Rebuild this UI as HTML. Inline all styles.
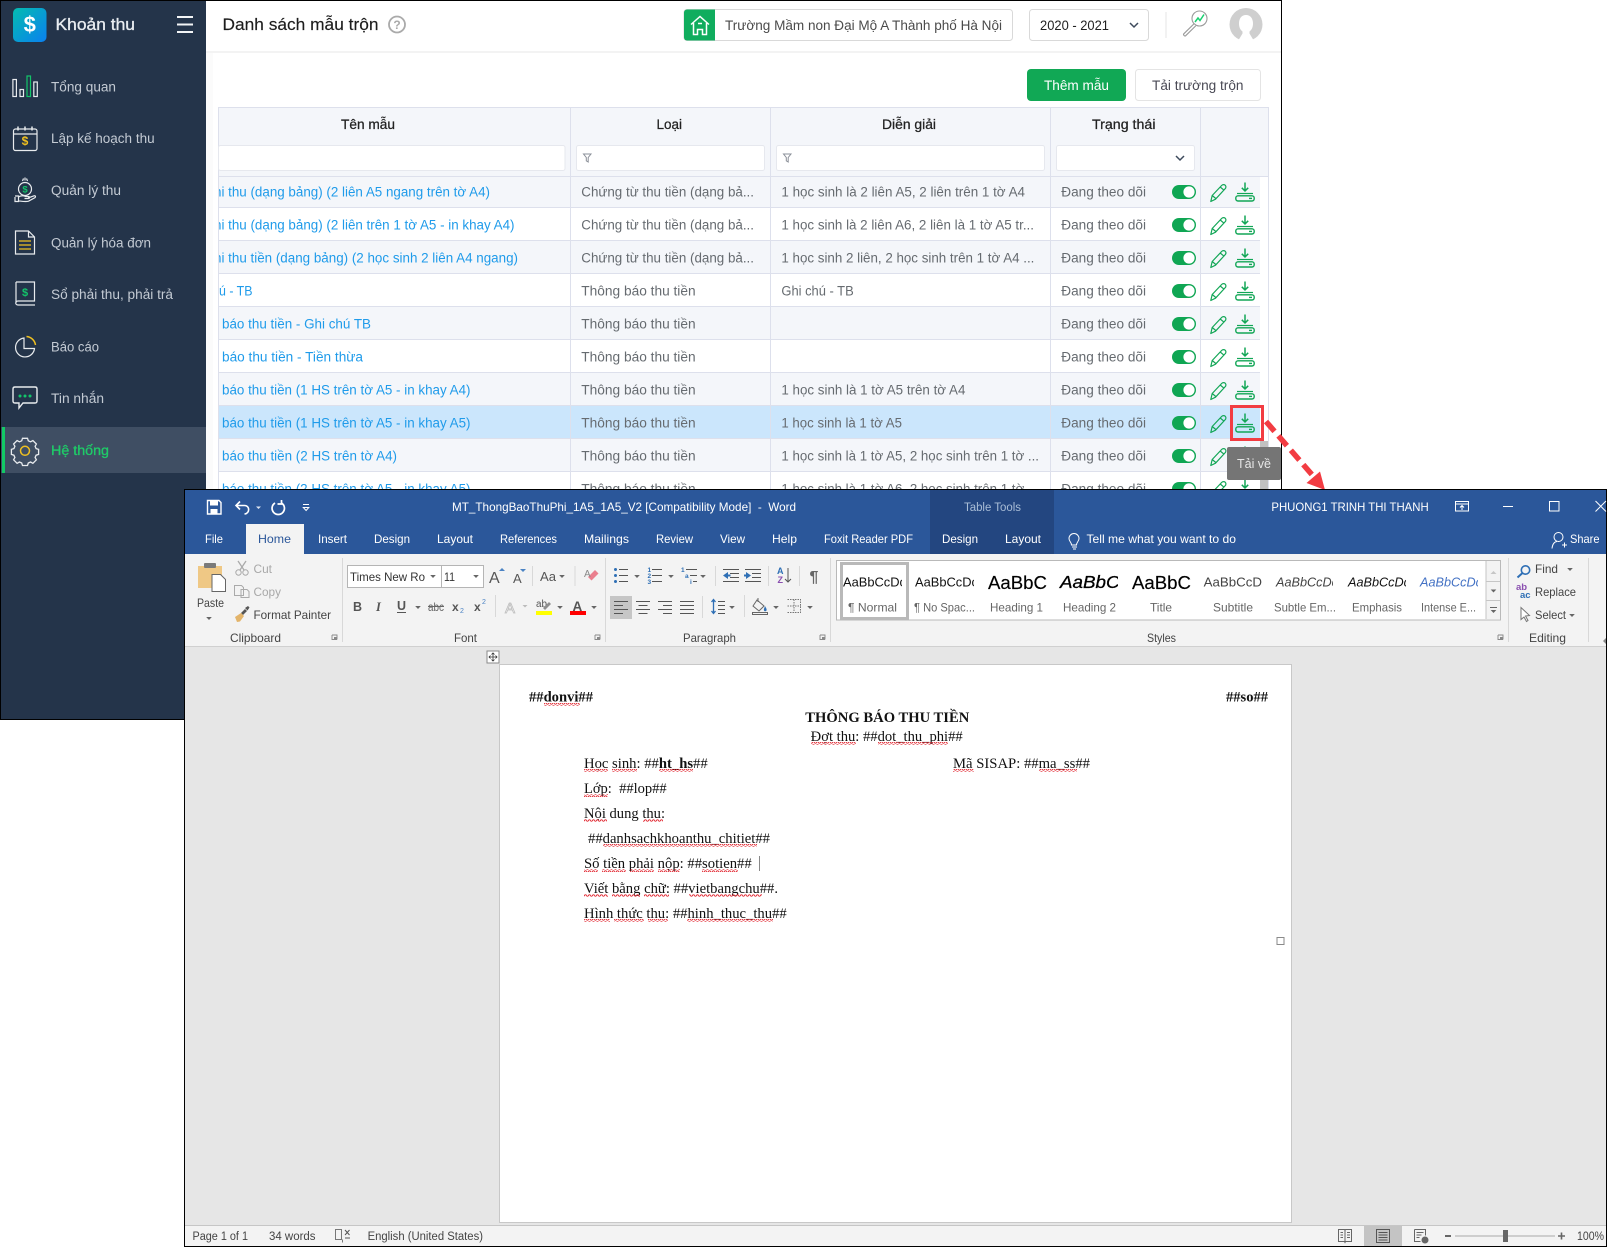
<!DOCTYPE html>
<html lang="vi"><head><meta charset="utf-8"><title>Danh sách mẫu trộn</title>
<style>
html,body{margin:0;padding:0;background:#fff;width:1607px;height:1247px;overflow:hidden}
svg{display:block}
text{font-family:"Liberation Sans","DejaVu Sans",sans-serif;white-space:pre}
.nav{font-size:13.5px;fill:#c3cad3}
.lk{font-size:13.5px;fill:#1f9bea}
.td{font-size:13.5px;fill:#666b70}
.th{font-size:13.5px;fill:#222;stroke:#222;stroke-width:.25}
.w{font-size:12px;fill:#fff}
.r{font-size:12px;fill:#444}
.g{font-size:12px;fill:#a8a8a8}
.l{font-size:12px;fill:#666}
.sb{font-size:11.5px;fill:#444}
.d{font-family:"Liberation Serif","Times New Roman",serif;font-size:14.5px;fill:#111}
.b{font-weight:700}
</style></head><body>
<svg width="1607" height="1247" viewBox="0 0 1607 1247" xmlns="http://www.w3.org/2000/svg">
<defs>
<linearGradient id="lg" x1="0" y1="0" x2="1" y2="1"><stop offset="0" stop-color="#04bcb0"/><stop offset="1" stop-color="#0a80f0"/></linearGradient>
<pattern id="wv" width="4" height="3" patternUnits="userSpaceOnUse"><path d="M0 2.2L1 .8 2 .8 3 2.2 4 2.2" fill="none" stroke="#e0202a" stroke-width=".9"/></pattern>
<clipPath id="cn"><rect x="219" y="176" width="350" height="320"/></clipPath>
<g id="acts">
<rect x="1172" y="185" width="24" height="14" rx="7" fill="#0fa653"/><circle cx="1189" cy="192" r="5.600" fill="#fff"/>
<path d="M1210.800 201.500l1.400-6 9.400-10c1.200-1.200 3-1.200 3.800 0 .8 1 .6 2.400-.5 3.500l-9.400 10.200zM1212.200 195.500l4.200 3.500M1220 186.900l4.200 3.400" fill="none" stroke="#12a656" stroke-width="1.200" stroke-linejoin="round"/>
<path d="M1245 182.500v8M1241.800 187.800l3.200 3.200 3.200-3.200" fill="none" stroke="#12a656" stroke-width="1.500"/>
<path d="M1237 193.500h16" stroke="#12a656" stroke-width="1.200"/>
<rect x="1235.800" y="195.800" width="18.400" height="5.200" rx="2.200" fill="none" stroke="#12a656" stroke-width="1.400"/><path d="M1249 198.400h3" stroke="#12a656" stroke-width="1.400"/>
</g>
<path id="tri" d="M-2.800 0h5.600L0 3z" fill="#666"/>
<g id="l4" stroke="#555" stroke-width="1"><path d="M0 .5h14M0 4.500h9M0 8.500h14M0 12.500h9"/></g>
<g id="l4c" stroke="#555" stroke-width="1"><path d="M0 .5h14M2.500 4.500h9M0 8.500h14M2.500 12.500h9"/></g>
<g id="l4r" stroke="#555" stroke-width="1"><path d="M0 .5h14M5 4.500h9M0 8.500h14M5 12.500h9"/></g>
<g id="l4j" stroke="#555" stroke-width="1"><path d="M0 .5h14M0 4.500h14M0 8.500h14M0 12.500h14"/></g>
<g id="lc"><path d="M0 0h5v4.500M5 4.500H0V0" fill="none" stroke="#888" stroke-width=".9"/><path d="M2 2h2.800v2.500H2z" fill="#888"/></g>
</defs>

<rect x="0" y="0" width="1282" height="720" fill="#000"/>
<rect x="1" y="1" width="1280" height="718" fill="#fff"/>

<rect x="1" y="1" width="205" height="718" fill="#24344a"/>
<rect x="13" y="8" width="33.500" height="34" rx="5" fill="url(#lg)"/>
<text x="29.800" y="32" text-anchor="middle" style="font-size:22px;font-weight:700;fill:#fff">$</text>
<text x="55.500" y="30" textLength="79.500" lengthAdjust="spacingAndGlyphs" style="font-size:16.500px;fill:#e9edf1;stroke:#e9edf1;stroke-width:.3">Khoản thu</text>
<path d="M177 17h16M177 24.500h16M177 32h16" stroke="#f2f4f6" stroke-width="2"/>

<g fill="none" stroke="#e8ebee" stroke-width="1.200">
<rect x="12.900" y="79.500" width="3.500" height="17"/><rect x="20" y="89.500" width="3.500" height="7"/><rect x="27" y="76" width="3.500" height="20.500" stroke="#13c56a"/><rect x="33.800" y="82" width="3.500" height="14.500"/>
<rect x="13.500" y="129" width="23.500" height="21.500" rx="2"/><path d="M14 134h23"/><path d="M18 126.500v4M25 126.500v4M32 126.500v4" stroke-width="1.500"/>
<circle cx="25" cy="189" r="6.500"/><path d="M22.500 181l1-2.500M25 180.500v-3M27.500 181l-1-2.500"/><path d="M15 197v4.500h3.500v-5.500h-3.500M18.500 197c3-2 5-1.500 7-.5h3c1.200 0 1.200 2 0 2h-4M28 198l6-2.200c1.500-.4 2 1 1 1.800l-6.500 3.600c-3 .8-7 0-10.500-.4"/>
<path d="M15.500 231h13l6 6v17h-19zM28.500 231v6h6"/>
<path d="M16 282h18.500v19H18c-3 0-3 4 0 4h17M16 282v21"/>
<path d="M24 338a9.500 9.500 0 1 0 10.500 10.500H24z"/>
<path d="M15 387h20c1.300 0 2 .7 2 2v12c0 1.300-.7 2-2 2h-12l-4 5v-5h-4c-1.300 0-2-.7-2-2v-12c0-1.300.7-2 2-2z" stroke-width="1.400"/>
</g>
<path d="M26.500 336.500a10 10 0 0 1 9 8.500" fill="none" stroke="#f0c020" stroke-width="1.500"/>
<g stroke="#f0c020" stroke-width="1.300"><path d="M19 241h12M19 245h12M19 249h12"/></g>
<text x="25" y="145" text-anchor="middle" style="font-size:12px;font-weight:700;fill:#f0c020">$</text>
<text x="25" y="192.500" text-anchor="middle" style="font-size:9.500px;font-weight:700;fill:#13c56a">$</text>
<text x="25" y="296" text-anchor="middle" style="font-size:11px;font-weight:700;fill:#13c56a">$</text>
<circle cx="20" cy="396" r="1.500" fill="#13c56a"/><circle cx="25" cy="396" r="1.500" fill="#13c56a"/><circle cx="30" cy="396" r="1.500" fill="#13c56a"/>
<rect x="1" y="427" width="205" height="46" fill="#3f4e63"/>
<rect x="2" y="427" width="3" height="46" fill="#12c965"/>
<g fill="none" stroke="#e8ebee" stroke-width="1.300"><path d="M22.500 438.300h5l.8 2.500 2.300 1 2.300-1.300 3.500 3.500-1.300 2.300 1 2.300 2.500.8v5l-2.500.8-1 2.300 1.300 2.300-3.500 3.500-2.300-1.300-2.300 1-.8 2.500h-5l-.8-2.500-2.300-1-2.300 1.300-3.500-3.500 1.300-2.300-1-2.300-2.500-.8v-5l2.500-.8 1-2.300-1.300-2.300 3.500-3.500 2.300 1.300 2.300-1z"/></g>
<circle cx="25" cy="450.800" r="4.500" fill="none" stroke="#f0c020" stroke-width="1.500"/>

<text class="nav" x="51" y="91.500" textLength="65" lengthAdjust="spacingAndGlyphs">Tổng quan</text>
<text class="nav" x="51" y="143" textLength="103.600" lengthAdjust="spacingAndGlyphs">Lập kế hoạch thu</text>
<text class="nav" x="51" y="195" textLength="70" lengthAdjust="spacingAndGlyphs">Quản lý thu</text>
<text class="nav" x="51" y="247.500" textLength="100" lengthAdjust="spacingAndGlyphs">Quản lý hóa đơn</text>
<text class="nav" x="51" y="299" textLength="122" lengthAdjust="spacingAndGlyphs">Sổ phải thu, phải trả</text>
<text class="nav" x="51" y="351.500" textLength="48" lengthAdjust="spacingAndGlyphs">Báo cáo</text>
<text class="nav" x="51" y="403" textLength="53" lengthAdjust="spacingAndGlyphs">Tin nhắn</text>
<text class="nav" x="51" y="455" textLength="58" lengthAdjust="spacingAndGlyphs" style="fill:#1fcb68;stroke:#1fcb68;stroke-width:.3">Hệ thống</text>

<rect x="206" y="51" width="1075" height="2" fill="#f3f3f3"/>
<rect x="206" y="53" width="7" height="440" fill="#fbfbfb"/>
<text x="222.500" y="30" textLength="156" lengthAdjust="spacingAndGlyphs" style="font-size:16.500px;fill:#1d1d1d;stroke:#1d1d1d;stroke-width:.15">Danh sách mẫu trộn</text>
<circle cx="397" cy="24.500" r="8" fill="none" stroke="#aaa" stroke-width="1.800"/>
<text x="397" y="29" text-anchor="middle" style="font-size:12px;font-weight:700;fill:#aaa">?</text>

<rect x="684" y="9.500" width="328.500" height="31" rx="3" fill="#fff" stroke="#d9d9d9"/>
<path d="M684 12.500a3 3 0 0 1 3-3h28v31h-28a3 3 0 0 1-3-3z" fill="#10ad5e"/>
<path d="M691 24.500l9-8 9 8M693.500 23v11.500h4v-5h5v5h4V23M698 23.500h4" fill="none" stroke="#fff" stroke-width="1.500"/>
<text x="725" y="30" textLength="277" lengthAdjust="spacingAndGlyphs" style="font-size:13.500px;fill:#4b4b4b">Trường Mầm non Đại Mộ A Thành phố Hà Nội</text>
<rect x="1029.500" y="9.500" width="119" height="31" rx="3" fill="#fff" stroke="#d9d9d9"/>
<text x="1040" y="30" textLength="69" lengthAdjust="spacingAndGlyphs" style="font-size:13.500px;fill:#222">2020 - 2021</text>
<path d="M1130 23l4 4 4-4" fill="none" stroke="#3d4a5c" stroke-width="1.500"/>
<rect x="1165.500" y="12" width="1" height="26" fill="#e6e6e6"/>
<circle cx="1199.500" cy="18.500" r="7.500" fill="#fff" stroke="#9a9a9a" stroke-width="1.100"/>
<path d="M1195 22l3-4 2 2.500 4-6" fill="none" stroke="#18d070" stroke-width="1.500"/>
<path d="M1193.800 24l-10 9.800c-.9 1 .9 2.800 1.900 1.900l10-9.800" fill="#fff" stroke="#9a9a9a" stroke-width="1.100"/>
<circle cx="1246" cy="24.500" r="16.500" fill="#cfcfcf"/>
<path d="M1246 15c-4.500 0-7 3.500-7 8.500 0 4 1.500 6.500 3.500 8v2l-4.500 7.500h16l-4.500-7.500v-2c2-1.500 3.500-4 3.500-8 0-5-2.500-8.500-7-8.500z" fill="#fff"/>

<rect x="1027" y="69" width="99" height="32" rx="4" fill="#11a855"/>
<text x="1044" y="90" textLength="65" lengthAdjust="spacingAndGlyphs" style="font-size:13.500px;fill:#fff">Thêm mẫu</text>
<rect x="1135.500" y="69.500" width="125" height="31" rx="3" fill="#fff" stroke="#e4e4e4"/>
<text x="1152" y="90" textLength="91.500" lengthAdjust="spacingAndGlyphs" style="font-size:13.500px;fill:#4a4a55">Tải trường trộn</text>

<rect x="218" y="107" width="1051" height="69" fill="#f4f6fa"/>
<rect x="219" y="176" width="1041" height="31" fill="#f4f6fa"/>
<rect x="219" y="240" width="1041" height="33" fill="#f4f6fa"/>
<rect x="219" y="306" width="1041" height="33" fill="#f4f6fa"/>
<rect x="219" y="372" width="1041" height="33" fill="#f4f6fa"/>
<rect x="219" y="405" width="1041" height="33" fill="#cbe6fc"/>
<rect x="219" y="438" width="1041" height="33" fill="#f4f6fa"/>
<g fill="#dde0ec">
<rect x="218" y="107" width="1051" height="1"/>
<rect x="218" y="107" width="1" height="395"/>
<rect x="1268" y="107" width="1" height="395"/>
<rect x="570" y="107" width="1" height="395"/><rect x="770" y="107" width="1" height="395"/><rect x="1050" y="107" width="1" height="395"/><rect x="1200" y="107" width="1" height="395"/>
<rect x="218" y="176" width="1051" height="1"/>
<rect x="218" y="207" width="1042" height="1"/><rect x="218" y="240" width="1042" height="1"/><rect x="218" y="273" width="1042" height="1"/><rect x="218" y="306" width="1042" height="1"/><rect x="218" y="339" width="1042" height="1"/><rect x="218" y="372" width="1042" height="1"/><rect x="218" y="405" width="1042" height="1"/><rect x="218" y="438" width="1042" height="1"/><rect x="218" y="471" width="1042" height="1"/>
</g>
<rect x="218.500" y="145.500" width="346.500" height="25" rx="2" fill="#fff" stroke="#e6e8ee"/>
<rect x="576.500" y="145.500" width="188" height="25" rx="2" fill="#fff" stroke="#e6e8ee"/>
<rect x="776.500" y="145.500" width="268" height="25" rx="2" fill="#fff" stroke="#e6e8ee"/>
<rect x="1056.500" y="145.500" width="138" height="25" rx="2" fill="#fff" stroke="#e6e8ee"/>
<path d="M583.500 154h7.500l-2.800 3.500v4.500l-1.900-1.200v-3.300zM783.500 154h7.500l-2.800 3.500v4.500l-1.900-1.200v-3.300z" fill="none" stroke="#8a8f98"/>
<path d="M1176 156l4 4 4-4" fill="none" stroke="#3d4a5c" stroke-width="1.500"/>

<text class="th" x="341" y="129" textLength="54" lengthAdjust="spacingAndGlyphs">Tên mẫu</text>
<text class="th" x="656.500" y="129" textLength="25.500" lengthAdjust="spacingAndGlyphs">Loại</text>
<text class="th" x="882" y="129" textLength="54" lengthAdjust="spacingAndGlyphs">Diễn giải</text>
<text class="th" x="1092" y="129" textLength="63.500" lengthAdjust="spacingAndGlyphs">Trạng thái</text>

<g clip-path="url(#cn)">
<text class="lk" x="214" y="196.500" textLength="276" lengthAdjust="spacingAndGlyphs">hi thu (dạng bảng) (2 liên A5 ngang trên tờ A4)</text>
<text class="lk" x="214" y="229.500" textLength="300.500" lengthAdjust="spacingAndGlyphs">hi thu (dạng bảng) (2 liên trên 1 tờ A5 - in khay A4)</text>
<text class="lk" x="214" y="262.500" textLength="304" lengthAdjust="spacingAndGlyphs">hi thu tiền (dạng bảng) (2 học sinh 2 liên A4 ngang)</text>
<text class="lk" x="219" y="295.500" textLength="33.500" lengthAdjust="spacingAndGlyphs">ú - TB</text>
<text class="lk" x="222" y="328.500" textLength="149" lengthAdjust="spacingAndGlyphs">báo thu tiền - Ghi chú TB</text>
<text class="lk" x="222" y="361.500" textLength="141" lengthAdjust="spacingAndGlyphs">báo thu tiền - Tiền thừa</text>
<text class="lk" x="222" y="394.500" textLength="248.500" lengthAdjust="spacingAndGlyphs">báo thu tiền (1 HS trên tờ A5 - in khay A4)</text>
<text class="lk" x="222" y="427.500" textLength="248.500" lengthAdjust="spacingAndGlyphs">báo thu tiền (1 HS trên tờ A5 - in khay A5)</text>
<text class="lk" x="222" y="460.500" textLength="175" lengthAdjust="spacingAndGlyphs">báo thu tiền (2 HS trên tờ A4)</text>
<text class="lk" x="222" y="493.500" textLength="248.500" lengthAdjust="spacingAndGlyphs">báo thu tiền (2 HS trên tờ A5 - in khay A5)</text>
</g>

<text class="td" x="581.300" y="196.500" textLength="172.700" lengthAdjust="spacingAndGlyphs">Chứng từ thu tiền (dạng bả...</text>
<text class="td" x="581.300" y="229.500" textLength="172.700" lengthAdjust="spacingAndGlyphs">Chứng từ thu tiền (dạng bả...</text>
<text class="td" x="581.300" y="262.500" textLength="172.700" lengthAdjust="spacingAndGlyphs">Chứng từ thu tiền (dạng bả...</text>
<text class="td" x="581.300" y="295.500" textLength="114.300" lengthAdjust="spacingAndGlyphs">Thông báo thu tiền</text>
<text class="td" x="581.300" y="328.500" textLength="114.300" lengthAdjust="spacingAndGlyphs">Thông báo thu tiền</text>
<text class="td" x="581.300" y="361.500" textLength="114.300" lengthAdjust="spacingAndGlyphs">Thông báo thu tiền</text>
<text class="td" x="581.300" y="394.500" textLength="114.300" lengthAdjust="spacingAndGlyphs">Thông báo thu tiền</text>
<text class="td" x="581.300" y="427.500" textLength="114.300" lengthAdjust="spacingAndGlyphs">Thông báo thu tiền</text>
<text class="td" x="581.300" y="460.500" textLength="114.300" lengthAdjust="spacingAndGlyphs">Thông báo thu tiền</text>
<text class="td" x="581.300" y="493.500" textLength="114.300" lengthAdjust="spacingAndGlyphs">Thông báo thu tiền</text>

<text class="td" x="781.400" y="196.500" textLength="243.600" lengthAdjust="spacingAndGlyphs">1 học sinh là 2 liên A5, 2 liên trên 1 tờ A4</text>
<text class="td" x="781.400" y="229.500" textLength="252.600" lengthAdjust="spacingAndGlyphs">1 học sinh là 2 liên A6, 2 liên là 1 tờ A5 tr...</text>
<text class="td" x="781.400" y="262.500" textLength="253" lengthAdjust="spacingAndGlyphs">1 học sinh 2 liên, 2 học sinh trên 1 tờ A4 ...</text>
<text class="td" x="781.400" y="295.500" textLength="72.300" lengthAdjust="spacingAndGlyphs">Ghi chú - TB</text>
<text class="td" x="781.400" y="394.500" textLength="184" lengthAdjust="spacingAndGlyphs">1 học sinh là 1 tờ A5 trên tờ A4</text>
<text class="td" x="781.400" y="427.500" textLength="120.600" lengthAdjust="spacingAndGlyphs">1 học sinh là 1 tờ A5</text>
<text class="td" x="781.400" y="460.500" textLength="257.600" lengthAdjust="spacingAndGlyphs">1 học sinh là 1 tờ A5, 2 học sinh trên 1 tờ ...</text>
<text class="td" x="781.400" y="493.500" textLength="257.600" lengthAdjust="spacingAndGlyphs">1 học sinh là 1 tờ A6, 2 học sinh trên 1 tờ ...</text>

<text class="td" x="1061.300" y="196.500" textLength="84.700" lengthAdjust="spacingAndGlyphs">Đang theo dõi</text>
<text class="td" x="1061.300" y="229.500" textLength="84.700" lengthAdjust="spacingAndGlyphs">Đang theo dõi</text>
<text class="td" x="1061.300" y="262.500" textLength="84.700" lengthAdjust="spacingAndGlyphs">Đang theo dõi</text>
<text class="td" x="1061.300" y="295.500" textLength="84.700" lengthAdjust="spacingAndGlyphs">Đang theo dõi</text>
<text class="td" x="1061.300" y="328.500" textLength="84.700" lengthAdjust="spacingAndGlyphs">Đang theo dõi</text>
<text class="td" x="1061.300" y="361.500" textLength="84.700" lengthAdjust="spacingAndGlyphs">Đang theo dõi</text>
<text class="td" x="1061.300" y="394.500" textLength="84.700" lengthAdjust="spacingAndGlyphs">Đang theo dõi</text>
<text class="td" x="1061.300" y="427.500" textLength="84.700" lengthAdjust="spacingAndGlyphs">Đang theo dõi</text>
<text class="td" x="1061.300" y="460.500" textLength="84.700" lengthAdjust="spacingAndGlyphs">Đang theo dõi</text>
<text class="td" x="1061.300" y="493.500" textLength="84.700" lengthAdjust="spacingAndGlyphs">Đang theo dõi</text>

<use href="#acts"/><use href="#acts" y="33"/><use href="#acts" y="66"/><use href="#acts" y="99"/><use href="#acts" y="132"/><use href="#acts" y="165"/><use href="#acts" y="198"/><use href="#acts" y="231"/><use href="#acts" y="264"/><use href="#acts" y="297"/>

<rect x="1260" y="441" width="8" height="50" fill="#c1c1c1"/>
<rect x="1231.500" y="406.500" width="31" height="33" fill="none" stroke="#f23c42" stroke-width="3"/>
<rect x="1227" y="447" width="54" height="33" rx="2" fill="#757575"/>
<text x="1237" y="468" textLength="34" lengthAdjust="spacingAndGlyphs" style="font-size:13px;fill:#e6e6e6">Tải về</text>
<path d="M1266 421.500L1314 477" stroke="#f23c42" stroke-width="5.500" stroke-dasharray="13 6" fill="none"/>
<path d="M1325 490l-18.500-7 13.500-11.500z" fill="#f23c42"/>

<rect x="184" y="489" width="1423" height="758" fill="#000"/>
<rect x="185" y="490" width="1421" height="64" fill="#2b579a"/>
<rect x="930" y="490" width="124" height="64" fill="#234680"/>
<rect x="246" y="524" width="58" height="30" fill="#f3f3f3"/>
<rect x="185" y="554" width="1421" height="92" fill="#f3f3f3"/>
<rect x="185" y="646" width="1421" height="1" fill="#d0d0d0"/>
<rect x="185" y="647" width="1421" height="578" fill="#e6e6e6"/>
<rect x="185" y="1225" width="1421" height="21" fill="#f3f3f3"/>
<rect x="185" y="1225" width="1421" height="1" fill="#c6c6c6"/>

<path d="M207.500 500.500h11.500l2 2v11.500h-13.500z" fill="none" stroke="#fff" stroke-width="1.400"/><rect x="210" y="501" width="8" height="4.500" fill="#fff"/><rect x="210.500" y="509" width="7" height="5" fill="#fff"/>
<path d="M240 501.500l-4 4 4 4M236.500 505.500h8c5.500 0 5.500 8 0 8.500" fill="none" stroke="#fff" stroke-width="1.600"/>
<path d="M256 506.500h5l-2.500 2.500z" fill="#dfe6f1"/>
<path d="M275 503a6.200 6.200 0 1 0 6.500 0M281.500 500v4h-4" fill="none" stroke="#fff" stroke-width="1.700"/>
<path d="M303 504.500h6M303.300 507.500h5.500l-2.700 3z" fill="none" stroke="#fff"/>
<text class="w" x="452" y="511" textLength="344" lengthAdjust="spacingAndGlyphs">MT_ThongBaoThuPhi_1A5_1A5_V2 [Compatibility Mode]  -  Word</text>
<text x="964" y="511" textLength="57" lengthAdjust="spacingAndGlyphs" style="font-size:11.500px;fill:#a9bdd6">Table Tools</text>
<text class="w" x="1271.400" y="511" textLength="157.300" lengthAdjust="spacingAndGlyphs">PHUONG1 TRINH THI THANH</text>
<path d="M1455.500 501.500h13v9.500h-13zM1455.500 504h13M1462 510v-4M1460 507.500l2-2 2 2" fill="none" stroke="#fff"/>
<path d="M1503 506.500h10M1549.500 501.500h9.500v9.500h-9.500zM1595.500 501l10.500 10.500M1606 501l-10.500 10.500" fill="none" stroke="#fff"/>
<text class="w" x="205" y="543" textLength="18" lengthAdjust="spacingAndGlyphs">File</text>
<text x="258" y="543" textLength="33" lengthAdjust="spacingAndGlyphs" style="font-size:12px;fill:#2b579a">Home</text>
<text class="w" x="318" y="543" textLength="29" lengthAdjust="spacingAndGlyphs">Insert</text>
<text class="w" x="374" y="543" textLength="36" lengthAdjust="spacingAndGlyphs">Design</text>
<text class="w" x="437" y="543" textLength="36" lengthAdjust="spacingAndGlyphs">Layout</text>
<text class="w" x="500" y="543" textLength="57" lengthAdjust="spacingAndGlyphs">References</text>
<text class="w" x="584" y="543" textLength="45" lengthAdjust="spacingAndGlyphs">Mailings</text>
<text class="w" x="656" y="543" textLength="37" lengthAdjust="spacingAndGlyphs">Review</text>
<text class="w" x="720" y="543" textLength="25" lengthAdjust="spacingAndGlyphs">View</text>
<text class="w" x="772" y="543" textLength="25" lengthAdjust="spacingAndGlyphs">Help</text>
<text class="w" x="824" y="543" textLength="89" lengthAdjust="spacingAndGlyphs">Foxit Reader PDF</text>
<text class="w" x="942" y="543" textLength="36" lengthAdjust="spacingAndGlyphs">Design</text>
<text class="w" x="1005" y="543" textLength="36" lengthAdjust="spacingAndGlyphs">Layout</text>
<path d="M1071.500 545c0-3-2.500-3.500-2.500-6.500a5 5 0 0 1 10 0c0 3-2.500 3.500-2.500 6.500zM1072 547h5M1073 549h3" fill="none" stroke="#fff"/>
<text class="w" x="1086.500" y="543" textLength="149.500" lengthAdjust="spacingAndGlyphs">Tell me what you want to do</text>
<circle cx="1558.500" cy="537" r="4.500" fill="none" stroke="#fff"/><path d="M1552 548.500c.5-5 3-7 5-7M1562 545h5M1564.500 542.500v5" fill="none" stroke="#fff"/>
<text class="w" x="1570" y="543" textLength="29.500" lengthAdjust="spacingAndGlyphs">Share</text>

<path d="M198 566h24v22h-24z" fill="#efc885"/><rect x="204" y="563" width="12" height="5" rx="1" fill="#7a7a7a"/><path d="M212 574.500h8.500l5 5v12h-13.500z" fill="#fff" stroke="#666"/>
<text class="r" x="197" y="607" textLength="27" lengthAdjust="spacingAndGlyphs">Paste</text>
<use href="#tri" x="209" y="617"/>
<path d="M238 561l6 9M246 561l-6 9" fill="none" stroke="#aaa" stroke-width="1.300"/><circle cx="238.500" cy="572.500" r="2.700" fill="none" stroke="#aaa"/><circle cx="245.500" cy="572.500" r="2.700" fill="none" stroke="#aaa"/>
<text class="g" x="253.500" y="573" textLength="18.500" lengthAdjust="spacingAndGlyphs">Cut</text>
<path d="M234.500 585.500h7l2 2v8h-9zM241 589.500h6l2 2v6h-8z" fill="#f3f3f3" stroke="#aaa"/>
<text class="g" x="253.500" y="596" textLength="27.500" lengthAdjust="spacingAndGlyphs">Copy</text>
<path d="M241 613l4-4 2 2-4 4z" fill="#555"/><path d="M245 608l3-2 1.500 1.500-2 3z" fill="#555"/><path d="M235 617l6-4 3 3-4 5.500-3 .5z" fill="#e3b46a"/>
<text class="r" x="253.500" y="619" textLength="77.500" lengthAdjust="spacingAndGlyphs">Format Painter</text>
<text class="l" x="230" y="642" textLength="51" lengthAdjust="spacingAndGlyphs" style="fill:#444">Clipboard</text>
<use href="#lc" x="332" y="635"/>
<rect x="342" y="558" width="1" height="84" fill="#d8d8d8"/>

<rect x="347.500" y="565.500" width="136" height="22" fill="#fff" stroke="#b5b5b5"/><rect x="441" y="565" width="1" height="23" fill="#b5b5b5"/>
<text class="r" x="350" y="581" textLength="75" lengthAdjust="spacingAndGlyphs" style="fill:#333">Times New Ro</text>
<text class="r" x="444" y="581" textLength="11" lengthAdjust="spacingAndGlyphs" style="fill:#333">11</text>
<use href="#tri" x="433" y="575"/><use href="#tri" x="476" y="575"/>
<text x="489" y="583" style="font-size:16px;fill:#555">A</text><path d="M499 571h6l-3-3z" fill="#4b83c4"/>
<text x="513" y="583" style="font-size:13px;fill:#555">A</text><path d="M520 569h6l-3 3z" fill="#4b83c4"/>
<rect x="532" y="566" width="1" height="20" fill="#d8d8d8"/>
<text x="540" y="581" textLength="16" lengthAdjust="spacingAndGlyphs" style="font-size:13px;fill:#555">Aa</text><use href="#tri" x="562" y="575"/>
<rect x="574.500" y="566" width="1" height="20" fill="#d8d8d8"/>
<path d="M588 577l7-7 3.500 3.500-7 7z" fill="#ea7f8e"/><text x="584" y="577" style="font-size:10px;fill:#888">A</text>
<text x="353" y="611" style="font-size:12.500px;font-weight:700;fill:#555">B</text>
<text x="376" y="611" style="font-size:12.500px;font-style:italic;font-family:'Liberation Serif',serif;font-weight:700;fill:#555">I</text>
<text x="397" y="610" style="font-size:12.500px;font-weight:700;fill:#555">U</text><rect x="397" y="612" width="9" height="1" fill="#555"/>
<use href="#tri" x="418" y="606"/>
<text x="428" y="611" textLength="16" lengthAdjust="spacingAndGlyphs" style="font-size:12px;fill:#666">abc</text><rect x="428" y="606" width="16" height="1" fill="#666"/>
<text x="452" y="611" style="font-size:12px;font-weight:700;fill:#555">x</text><text x="460" y="613" style="font-size:7px;fill:#4b83c4">2</text>
<text x="474" y="611" style="font-size:12px;font-weight:700;fill:#555">x</text><text x="482" y="604" style="font-size:7px;fill:#4b83c4">2</text>
<rect x="495" y="595" width="1" height="22" fill="#d8d8d8"/>
<text x="505" y="613" style="font-size:15px;fill:#f3f3f3;stroke:#bdbdbd;stroke-width:.8">A</text><path d="M522.500 605h5l-2.500 2.500z" fill="#bbb"/>
<text x="536" y="607" textLength="11" lengthAdjust="spacingAndGlyphs" style="font-size:10px;fill:#555">ab</text><path d="M543 608l6-6 2 2-6 6z" fill="#8f8f8f"/><rect x="536" y="611" width="16" height="4" fill="#ffff00"/>
<use href="#tri" x="560" y="606"/>
<text x="572.500" y="611" style="font-size:13.500px;font-weight:700;fill:#555">A</text><rect x="570" y="611" width="16" height="4" fill="#f00"/>
<use href="#tri" x="594" y="606"/>
<text class="l" x="454" y="642" textLength="23" lengthAdjust="spacingAndGlyphs" style="fill:#444">Font</text>
<use href="#lc" x="595" y="635"/>
<rect x="605" y="558" width="1" height="84" fill="#d8d8d8"/>

<g fill="#2e6fb5"><circle cx="615.500" cy="569.500" r="1.500"/><circle cx="615.500" cy="575.500" r="1.500"/><circle cx="615.500" cy="581.500" r="1.500"/></g>
<path d="M619 569.500h9M619 575.500h9M619 581.500h9" stroke="#555"/><use href="#tri" x="637" y="575"/>
<text x="647.500" y="572" style="font-size:6.500px;font-weight:700;fill:#2e6fb5">1</text><text x="647.500" y="578" style="font-size:6.500px;font-weight:700;fill:#2e6fb5">2</text><text x="647.500" y="584" style="font-size:6.500px;font-weight:700;fill:#2e6fb5">3</text>
<path d="M652 569.500h10M652 575.500h10M652 581.500h10" stroke="#555"/><use href="#tri" x="671" y="575"/>
<text x="681" y="572" style="font-size:6.500px;font-weight:700;fill:#2e6fb5">1</text><text x="685" y="578" style="font-size:6.500px;font-weight:700;fill:#2e6fb5">a</text><text x="690" y="584" style="font-size:6.500px;font-weight:700;fill:#2e6fb5">i</text>
<path d="M686 569.500h11M690 575.500h7M693 581.500h4" stroke="#555"/><use href="#tri" x="703" y="575"/>
<rect x="715" y="566" width="1" height="20" fill="#d8d8d8"/>
<path d="M730 569.500h9M730 573.500h9M730 577.500h9M723 581.500h16" stroke="#555"/><path d="M723 575.500l5-3.500v2.500h2.500v2h-2.500v2.500z" fill="#2e6fb5"/><path d="M730 569.500h-7" stroke="#555"/>
<path d="M752 569.500h9M752 573.500h9M752 577.500h9M745 581.500h16M745 569.500h7" stroke="#555"/><path d="M751 575.500l-5-3.500v2.500h-2v2h2v2.500z" fill="#2e6fb5"/>
<rect x="768" y="566" width="1" height="20" fill="#d8d8d8"/>
<text x="777" y="574" style="font-size:9px;font-weight:700;fill:#2e6fb5">A</text><text x="777.500" y="583" style="font-size:9px;font-weight:700;fill:#8a4fb0">Z</text>
<path d="M788 568v14M785 579l3 3 3-3" fill="none" stroke="#555"/>
<rect x="799" y="566" width="1" height="20" fill="#d8d8d8"/>
<text x="809.500" y="582" style="font-size:16px;font-weight:700;fill:#666">¶</text>
<rect x="610" y="596" width="22" height="23" fill="#c6c6c6"/>
<use href="#l4" x="614" y="601"/><use href="#l4c" x="636" y="601"/><use href="#l4r" x="658" y="601"/><use href="#l4j" x="680" y="601"/>
<rect x="702" y="596" width="1" height="22" fill="#d8d8d8"/>
<path d="M713.500 600v13M711.500 602l2-2.500 2 2.500M711.500 611l2 2.500 2-2.500" fill="none" stroke="#2e6fb5" stroke-width="1.300"/><path d="M718 601.500h7M718 605.500h7M718 609.500h7M718 613.500h7" stroke="#555"/><use href="#tri" x="732" y="606"/>
<rect x="744" y="595" width="1" height="22" fill="#d8d8d8"/>
<path d="M757 600l7 6-5 5-6-5zM758 598v4M752.500 614.500h15v-2h-15z" fill="#f3f3f3" stroke="#666"/><path d="M765 606c1 2 2 3 1.500 4.500-.5 1-2 1-2.500 0-.5-1.500.5-2.500 1-4.500z" fill="#2e6fb5"/><use href="#tri" x="776" y="606"/>
<path d="M787.500 599.500h13v13h-13M787.500 606h13M794 599.500v13" fill="none" stroke="#777" stroke-dasharray="1.500 1"/><use href="#tri" x="810" y="606"/>
<text class="l" x="683" y="642" textLength="53" lengthAdjust="spacingAndGlyphs" style="fill:#444">Paragraph</text>
<use href="#lc" x="820" y="635"/>
<rect x="830" y="558" width="1" height="84" fill="#d8d8d8"/>

<rect x="836.500" y="560.500" width="664" height="59.500" fill="#fff" stroke="#b9b9b9"/>
<rect x="841.500" y="563.500" width="66" height="55" fill="#fff" stroke="#b9b9b9" stroke-width="3"/>
<g style="font-size:12.500px;fill:#111">
<text x="843" y="586.700" textLength="63" lengthAdjust="spacingAndGlyphs">AaBbCcDc</text>
<text x="915" y="586.700" textLength="63" lengthAdjust="spacingAndGlyphs">AaBbCcDc</text>
<text x="1060" y="588" textLength="69" lengthAdjust="spacingAndGlyphs" style="font-size:17.500px;font-style:italic;fill:#000;stroke:#000;stroke-width:.3">AaBbCc</text>
<text x="1276" y="586.700" textLength="62" lengthAdjust="spacingAndGlyphs" style="font-style:italic;fill:#444">AaBbCcDc</text>
<text x="1348" y="586.700" textLength="62" lengthAdjust="spacingAndGlyphs" style="font-style:italic">AaBbCcDc</text>
<text x="1420" y="586.700" textLength="62" lengthAdjust="spacingAndGlyphs" style="font-style:italic;fill:#4472c4">AaBbCcDc</text>
<text x="1203.700" y="586.700" textLength="58.300" lengthAdjust="spacingAndGlyphs" style="fill:#444">AaBbCcD</text>
<text x="988" y="589" textLength="59" lengthAdjust="spacingAndGlyphs" style="font-size:18px;fill:#000;stroke:#000;stroke-width:.15">AaBbC</text>
<text x="1132" y="589" textLength="59" lengthAdjust="spacingAndGlyphs" style="font-size:18px;fill:#000;stroke:#000;stroke-width:.15">AaBbC</text>
</g>
<g fill="#fff"><rect x="902" y="570" width="4" height="24"/><rect x="974" y="570" width="6" height="24"/><rect x="1118" y="570" width="12" height="24"/><rect x="1333" y="570" width="8" height="24"/><rect x="1406" y="570" width="8" height="24"/><rect x="1478" y="570" width="7" height="24"/></g>
<rect x="1486" y="561" width="14" height="58" fill="#f3f3f3"/>
<path d="M1486 561v58M1486 581.500h14M1486 600.500h14" stroke="#c6c6c6" fill="none"/>
<path d="M1490.500 574h6l-3-3z" fill="#c6c6c6"/><use href="#tri" x="1493.500" y="589.500"/><path d="M1490 607.500h7" stroke="#666"/><use href="#tri" x="1493.500" y="610"/>
<text class="l" x="848" y="611.700" textLength="49" lengthAdjust="spacingAndGlyphs">¶ Normal</text>
<text class="l" x="914" y="611.700" textLength="61" lengthAdjust="spacingAndGlyphs">¶ No Spac...</text>
<text class="l" x="990" y="611.700" textLength="53" lengthAdjust="spacingAndGlyphs">Heading 1</text>
<text class="l" x="1063" y="611.700" textLength="53" lengthAdjust="spacingAndGlyphs">Heading 2</text>
<text class="l" x="1150" y="611.700" textLength="22" lengthAdjust="spacingAndGlyphs">Title</text>
<text class="l" x="1213" y="611.700" textLength="40" lengthAdjust="spacingAndGlyphs">Subtitle</text>
<text class="l" x="1274" y="611.700" textLength="62" lengthAdjust="spacingAndGlyphs">Subtle Em...</text>
<text class="l" x="1352" y="611.700" textLength="50" lengthAdjust="spacingAndGlyphs">Emphasis</text>
<text class="l" x="1421" y="611.700" textLength="55" lengthAdjust="spacingAndGlyphs">Intense E...</text>
<text class="l" x="1147" y="642" textLength="29" lengthAdjust="spacingAndGlyphs" style="fill:#444">Styles</text>
<use href="#lc" x="1498" y="635"/>
<rect x="1508" y="558" width="1" height="84" fill="#d8d8d8"/>

<circle cx="1525.500" cy="570" r="4.200" fill="none" stroke="#2e6fb5" stroke-width="1.600"/><path d="M1522.500 573l-5 4.500" stroke="#2e6fb5" stroke-width="2"/>
<text class="r" x="1535" y="573" textLength="23" lengthAdjust="spacingAndGlyphs">Find</text><use href="#tri" x="1570" y="568"/>
<text x="1516" y="590" style="font-size:9.500px;font-weight:700;fill:#8a4fb0">ab</text><text x="1520" y="598" style="font-size:9.500px;font-weight:700;fill:#2e6fb5">ac</text>
<text class="r" x="1535" y="596" textLength="41" lengthAdjust="spacingAndGlyphs">Replace</text>
<path d="M1521 607.500v12l3-2.500 2.500 4.500 1.500-1-2.500-4.500 4-.5z" fill="#fff" stroke="#777"/>
<text class="r" x="1535" y="619" textLength="31" lengthAdjust="spacingAndGlyphs">Select</text><use href="#tri" x="1572" y="614"/>
<text class="l" x="1529" y="642" textLength="37" lengthAdjust="spacingAndGlyphs" style="fill:#444">Editing</text>
<rect x="1588" y="558" width="1" height="84" fill="#d8d8d8"/>
<path d="M1606 638l-3 3 3 3z" fill="#888"/>

<rect x="499.500" y="664.500" width="792" height="558" fill="#fff" stroke="#c8c8c8"/>
<rect x="487" y="651" width="12" height="12" fill="#fff" stroke="#8a8a8a"/>
<path d="M493 653v8M489 657h8M491.500 654.500l1.500-1.500 1.500 1.500M491.500 659.500l1.500 1.500 1.500-1.500M490.500 655.500l-1.500 1.500 1.500 1.500M495.500 655.500l1.500 1.500-1.500 1.500" fill="none" stroke="#333" stroke-width=".8"/>

<text class="d b" x="529" y="701.700" textLength="64" lengthAdjust="spacingAndGlyphs">##donvi##</text>
<text class="d b" x="1226" y="701.700" textLength="42" lengthAdjust="spacingAndGlyphs">##so##</text>
<text class="d b" x="805.300" y="722" textLength="164" lengthAdjust="spacingAndGlyphs" style="font-size:15px">THÔNG BÁO THU TIỀN</text>
<text class="d" x="810.700" y="741" textLength="152" lengthAdjust="spacingAndGlyphs">Đợt thu: ##dot_thu_phi##</text>
<text class="d" x="584" y="768" textLength="123.700" lengthAdjust="spacingAndGlyphs">Học sinh: ##<tspan class="b">ht_hs</tspan>##</text>
<text class="d" x="953" y="768" textLength="137" lengthAdjust="spacingAndGlyphs">Mã SISAP: ##ma_ss##</text>
<text class="d" x="584" y="793" textLength="82.700" lengthAdjust="spacingAndGlyphs">Lớp:  ##lop##</text>
<text class="d" x="584" y="818" textLength="81" lengthAdjust="spacingAndGlyphs">Nội dung thu:</text>
<text class="d" x="588" y="843" textLength="182" lengthAdjust="spacingAndGlyphs">##danhsachkhoanthu_chitiet##</text>
<text class="d" x="584" y="868" textLength="167.700" lengthAdjust="spacingAndGlyphs">Số tiền phải nộp: ##sotien##</text>
<text class="d" x="584" y="893" textLength="194" lengthAdjust="spacingAndGlyphs">Viết bằng chữ: ##vietbangchu##.</text>
<text class="d" x="584" y="918" textLength="202.700" lengthAdjust="spacingAndGlyphs">Hình thức thu: ##hinh_thuc_thu##</text>
<rect x="759" y="856" width="1" height="15" fill="#888"/>
<g fill="url(#wv)">
<rect x="544" y="703" width="36" height="3"/>
<rect x="811" y="742" width="45" height="3"/><rect x="878" y="742" width="70" height="3"/>
<rect x="584" y="769" width="24" height="3"/><rect x="612" y="769" width="25" height="3"/><rect x="659" y="769" width="34" height="3"/>
<rect x="953" y="769" width="20.700" height="3"/><rect x="1039" y="769" width="38" height="3"/>
<rect x="584" y="794" width="24" height="3"/>
<rect x="584" y="819" width="23" height="3"/><rect x="643" y="819" width="20" height="3"/>
<rect x="603" y="844" width="154" height="3"/>
<rect x="584" y="869" width="14" height="3"/><rect x="602" y="869" width="24" height="3"/><rect x="630" y="869" width="24" height="3"/><rect x="658" y="869" width="22" height="3"/><rect x="702" y="869" width="36" height="3"/>
<rect x="584" y="894" width="24" height="3"/><rect x="612" y="894" width="28" height="3"/><rect x="644" y="894" width="25" height="3"/><rect x="689" y="894" width="73" height="3"/>
<rect x="584" y="919" width="26" height="3"/><rect x="614" y="919" width="30" height="3"/><rect x="648" y="919" width="20" height="3"/><rect x="687" y="919" width="86" height="3"/>
</g>
<rect x="1277" y="937.500" width="7" height="7" fill="#fff" stroke="#8a8a8a"/>

<text class="sb" x="192.500" y="1240" textLength="55.500" lengthAdjust="spacingAndGlyphs">Page 1 of 1</text>
<text class="sb" x="269" y="1240" textLength="46.500" lengthAdjust="spacingAndGlyphs">34 words</text>
<path d="M335.500 1229.500h6v10h-6zM342.500 1239.500v3" fill="none" stroke="#777"/><path d="M345 1230l4.500 5M349.500 1230l-4.500 5M345 1238h5" fill="none" stroke="#555"/>
<text class="sb" x="367.600" y="1240" textLength="115.400" lengthAdjust="spacingAndGlyphs">English (United States)</text>
<path d="M1338.500 1229.500h6l.5 1 .5-1h6v12h-6l-.5 1-.5-1h-6zM1345 1230.500v11M1340.500 1232.500h2.500M1340.500 1235h2.500M1340.500 1237.500h2.500M1347 1232.500h3M1347 1235h3M1347 1237.500h3" fill="none" stroke="#666"/>
<rect x="1364" y="1226" width="38" height="20" fill="#c4c4c4"/>
<path d="M1376.500 1229.500h13v13h-13zM1378.500 1232.500h9M1378.500 1235h9M1378.500 1237.500h9M1378.500 1240h9" fill="none" stroke="#555"/>
<path d="M1414.500 1229.500h11v6M1414.500 1229.500v12h6M1416.500 1232.500h7M1416.500 1235h5M1416.500 1237.500h3" fill="none" stroke="#666"/><circle cx="1425" cy="1240" r="3.500" fill="#666"/>
<rect x="1445" y="1235" width="6" height="2" fill="#666"/>
<rect x="1455" y="1235.500" width="100" height="1" fill="#aaa"/>
<rect x="1503" y="1230" width="5" height="12" fill="#666"/>
<path d="M1558 1236h7M1561.500 1232.500v7" stroke="#666" stroke-width="1.600"/>
<text class="sb" x="1577" y="1240" textLength="27" lengthAdjust="spacingAndGlyphs">100%</text>
</svg>
</body></html>
